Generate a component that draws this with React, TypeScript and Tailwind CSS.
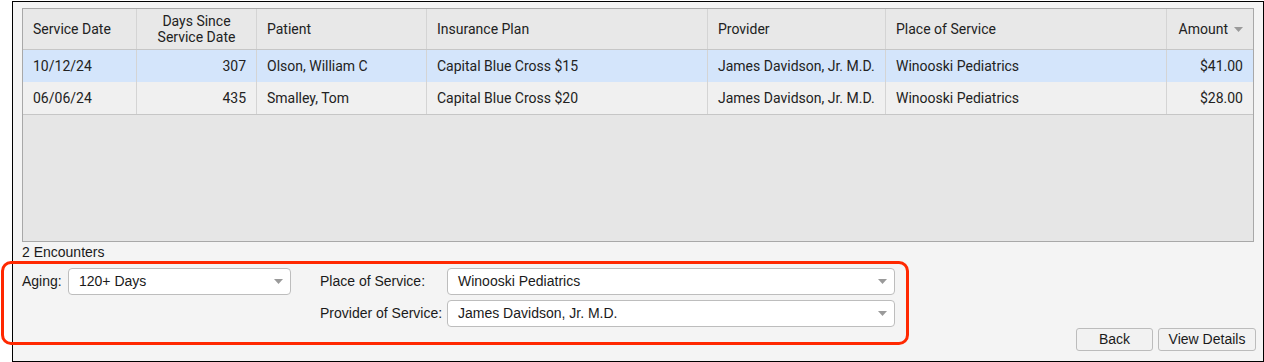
import { ReactNode } from "react";

const cols = "grid grid-cols-[114px_120px_170px_281px_178px_281px_1fr]";

const rows = [
  {
    date: "10/12/24",
    days: "307",
    patient: "Olson, William C",
    plan: "Capital Blue Cross $15",
    provider: "James Davidson, Jr. M.D.",
    place: "Winooski Pediatrics",
    amount: "$41.00",
    selected: true,
  },
  {
    date: "06/06/24",
    days: "435",
    patient: "Smalley, Tom",
    plan: "Capital Blue Cross $20",
    provider: "James Davidson, Jr. M.D.",
    place: "Winooski Pediatrics",
    amount: "$28.00",
    selected: false,
  },
];

function Caret() {
  return (
    <svg width="9" height="5" viewBox="0 0 9 5" className="shrink-0">
      <path d="M0 0h9L4.5 5z" fill="#9a9a9a" />
    </svg>
  );
}

function Cell({ children, right, last }: { children: ReactNode; right?: boolean; last?: boolean }) {
  return (
    <div
      className={`flex items-center px-[10px] whitespace-nowrap ${right ? "justify-end" : ""} ${
        last ? "" : "border-r border-[#d4d4d4]"
      }`}
    >
      {children}
    </div>
  );
}

function Select({ value, width }: { value: string; width: string }) {
  return (
    <div
      className={`${width} h-[27px] flex items-center justify-between pl-[10px] pr-[7px] bg-white border border-[#bdbdbd] rounded-[4px] text-[14px] text-[#1a1a1a]`}
    >
      <span>{value}</span>
      <Caret />
    </div>
  );
}

export default function App() {
  return (
    <div className="relative w-[1264px] h-[362px] bg-white">
      <div className="ml-[12px] mt-[1px] w-[1252px] h-[361px] border border-black bg-[#f4f4f4] pt-[6px] pl-[9px] pr-[9px] font-['Liberation_Sans',Arial,sans-serif]">
        {/* Encounters table */}
        <div className="h-[234px] border border-[#a8a8a8] bg-[#e6e6e6] flex flex-col text-[14px] text-[#222] font-['Roboto',sans-serif]">
          <div className={`${cols} h-[41px] bg-[#e8e8e8] border-b border-[#c6c6c6]`}>
            <Cell>Service Date</Cell>
            <div className="flex items-center justify-center text-center leading-[16px] border-r border-[#d4d4d4]">
              Days Since
              <br />
              Service Date
            </div>
            <Cell>Patient</Cell>
            <Cell>Insurance Plan</Cell>
            <Cell>Provider</Cell>
            <Cell>Place of Service</Cell>
            <Cell right last>
              <span className="mr-[6px]">Amount</span>
              <Caret />
            </Cell>
          </div>
          {rows.map((r, i) => (
            <div
              key={r.date}
              className={`${cols} ${i === rows.length - 1 ? "h-[33px] border-b border-[#c6c6c6]" : "h-[32px]"} ${
                r.selected ? "bg-[#d4e5fb]" : "bg-[#f0f0f0]"
              }`}
            >
              <Cell>{r.date}</Cell>
              <Cell right>{r.days}</Cell>
              <Cell>{r.patient}</Cell>
              <Cell>{r.plan}</Cell>
              <Cell>{r.provider}</Cell>
              <Cell>{r.place}</Cell>
              <Cell right last>
                {r.amount}
              </Cell>
            </div>
          ))}
        </div>

        <div className="mt-[2px] h-[16px] leading-[16px] text-[14px] text-[#1a1a1a]">2 Encounters</div>

        {/* Filters */}
        <div className="mt-[8px] flex items-start text-[14px] text-[#1a1a1a]">
          <div className="flex items-center h-[27px]">
            <span className="w-[46px]">Aging:</span>
            <Select value="120+ Days" width="w-[223px]" />
          </div>
          <div className="ml-[29px] grid grid-cols-[127px_448px] gap-y-[5px] items-center">
            <span>Place of Service:</span>
            <Select value="Winooski Pediatrics" width="w-[448px]" />
            <span>Provider of Service:</span>
            <Select value="James Davidson, Jr. M.D." width="w-[448px]" />
          </div>
        </div>

        {/* Actions */}
        <div className="mt-[1px] mr-[-2px] flex justify-end gap-[5px] text-[14px] text-[#1a1a1a]">
          <button className="w-[77px] h-[23px] bg-[#f2f2f2] border border-[#bcbcbc] rounded-[3px]">Back</button>
          <button className="w-[98px] h-[23px] bg-[#f2f2f2] border border-[#bcbcbc] rounded-[3px]">View Details</button>
        </div>
      </div>

      {/* highlight annotation */}
      <div className="absolute left-[1px] top-[260px] w-[908px] h-[84px] border-[3px] border-[#ff2800] rounded-[10px] pointer-events-none" />
    </div>
  );
}
